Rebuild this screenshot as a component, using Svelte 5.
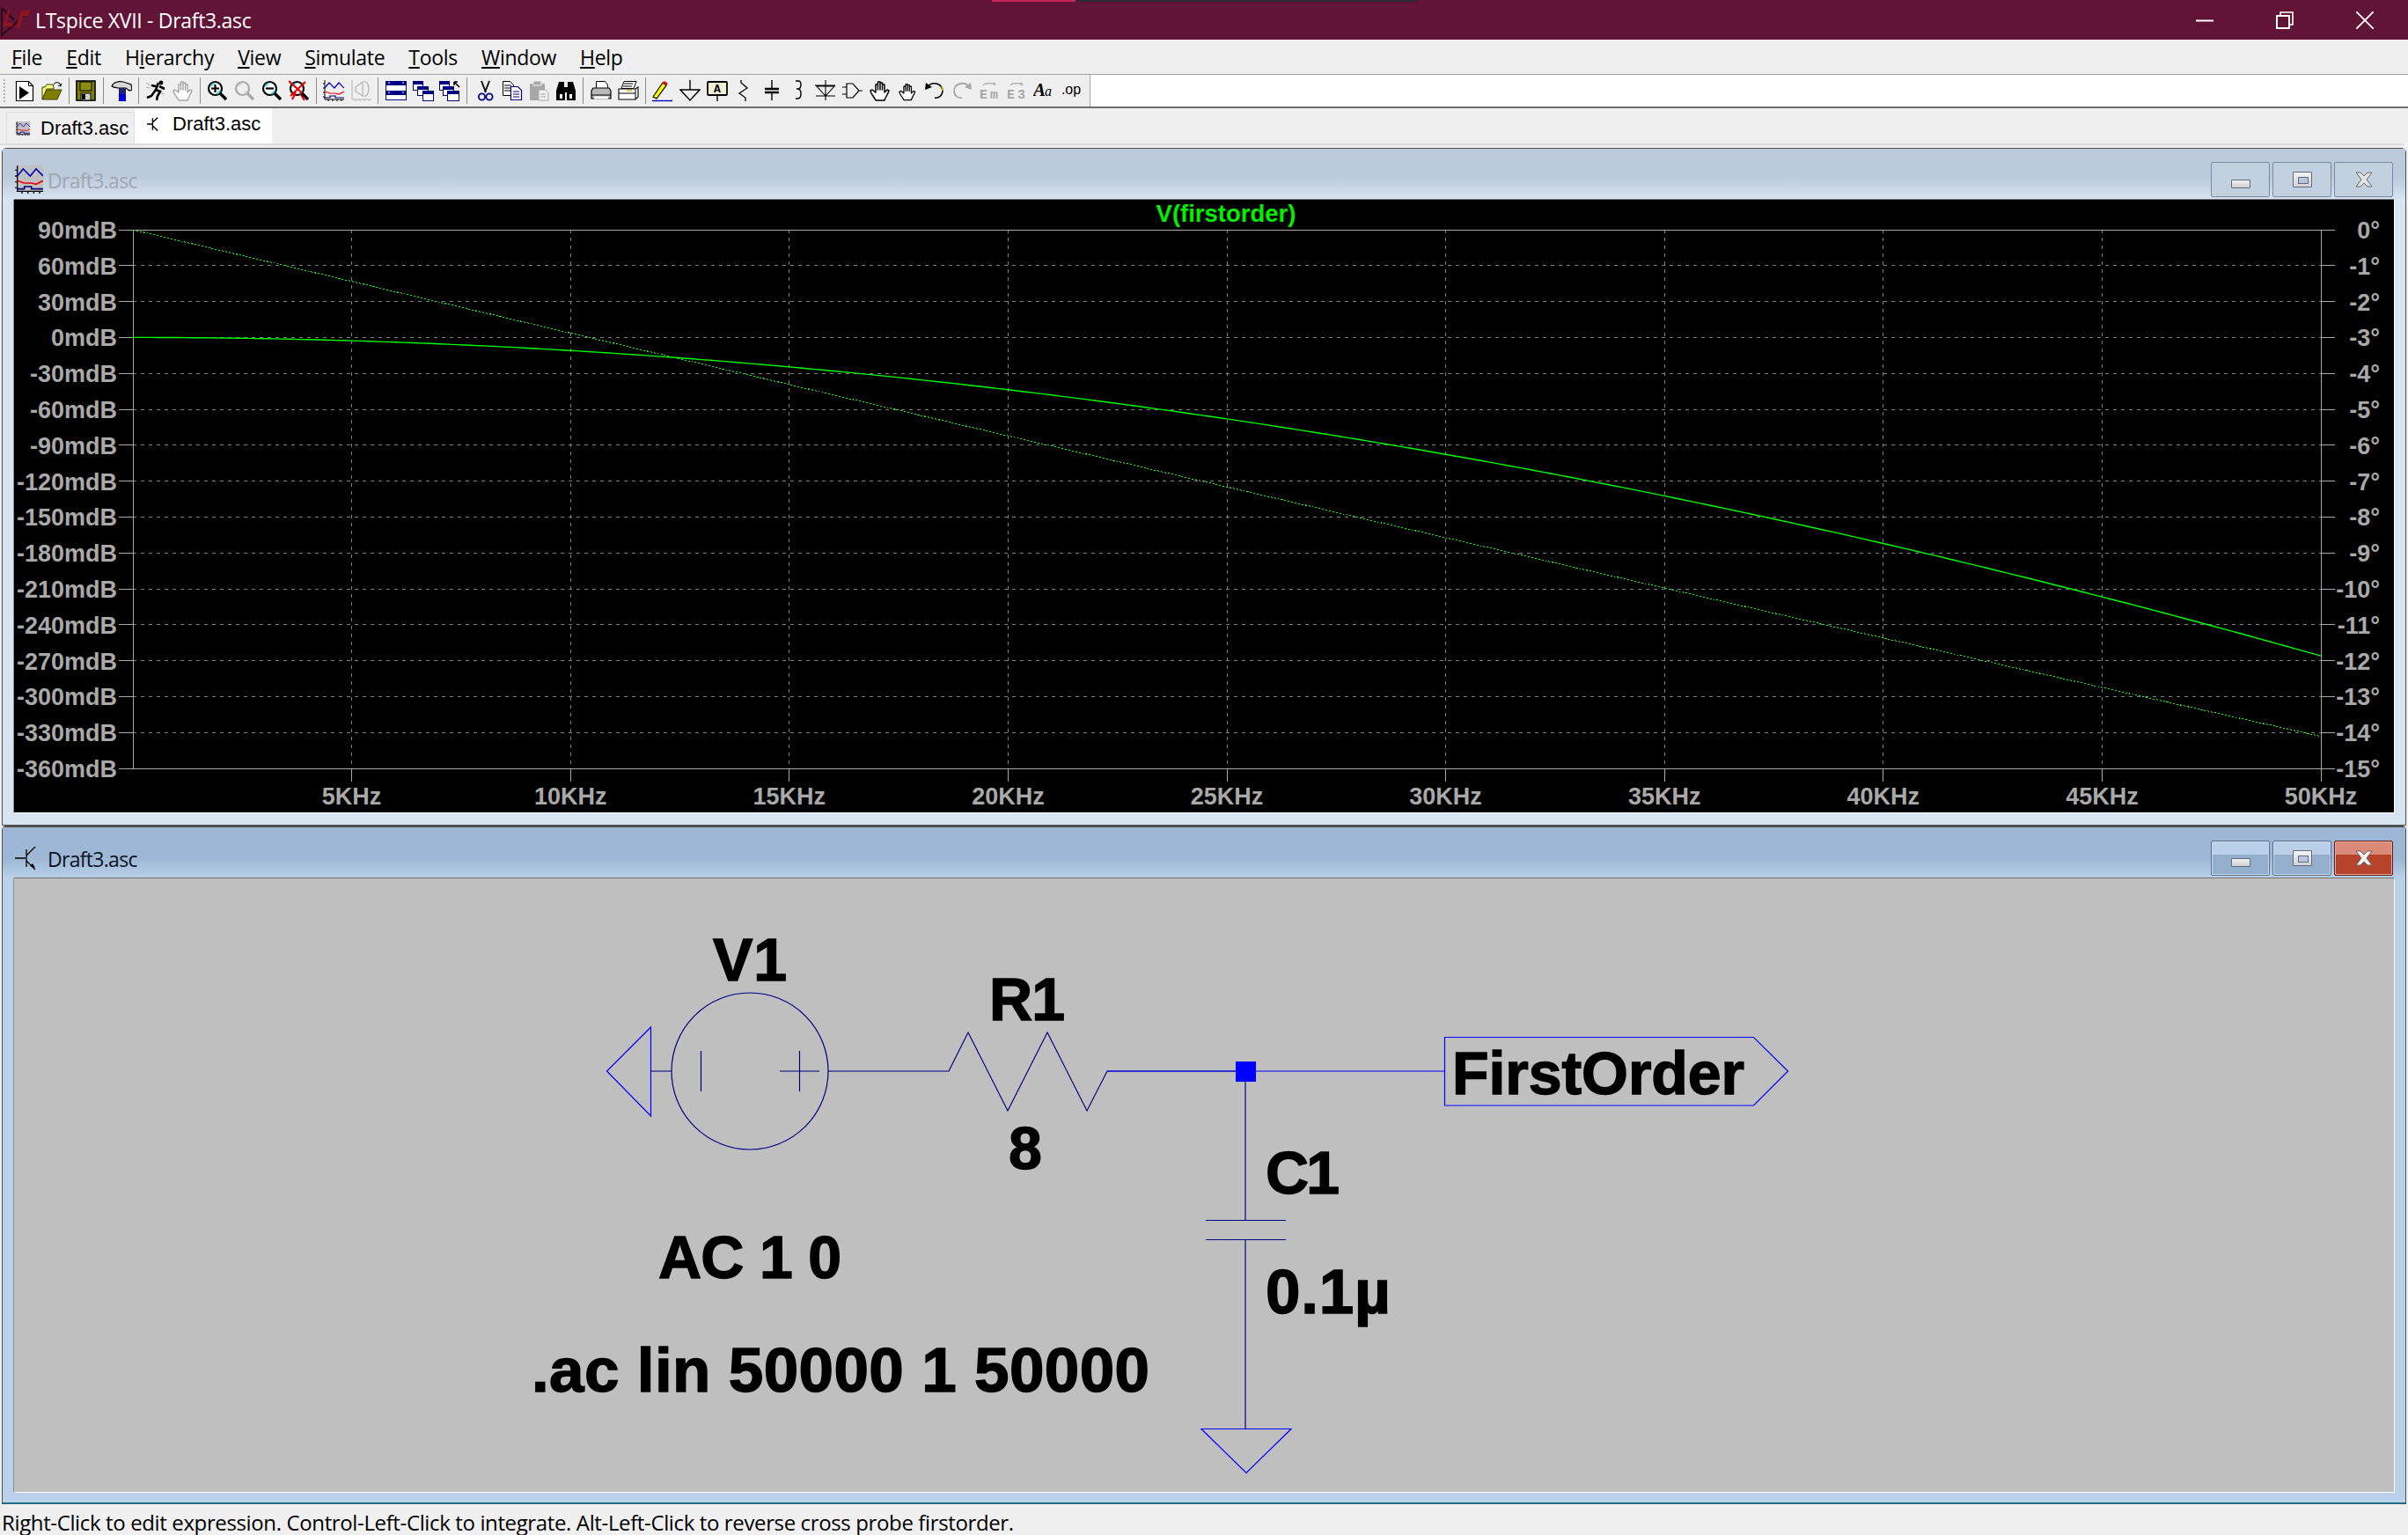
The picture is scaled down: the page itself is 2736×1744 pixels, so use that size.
<script>
  const menus = [
    { pre: '', ul: 'F', post: 'ile' },
    { pre: '', ul: 'E', post: 'dit' },
    { pre: 'H', ul: 'i', post: 'erarchy' },
    { pre: '', ul: 'V', post: 'iew' },
    { pre: '', ul: 'S', post: 'imulate' },
    { pre: '', ul: 'T', post: 'ools' },
    { pre: '', ul: 'W', post: 'indow' },
    { pre: '', ul: 'H', post: 'elp' }
  ];

  // toolbar glyphs, 24x24 boxes
  const mag = (inner, col = '#000', glass = '#fff') =>
    `<circle cx="9.5" cy="9.5" r="7.5" fill="${glass}" stroke="${col}" stroke-width="2.2"/>
     <path d="M4.5 7a6 6 0 0 1 4-3.4M15 12a6 6 0 0 1-3.5 3.5" fill="none" stroke="${col === '#000' ? '#22d8e8' : '#ccc'}" stroke-width="2"/>
     ${inner}
     <path d="M15 15l7 7" stroke="${col}" stroke-width="3.4"/>`;
  const plot = (a = '#0000c0', b = '#f00000', c = '#000080', k = '#000') =>
    `<path d="M2 0v22h22M0 4h2M0 9h2M0 14h2M0 19h2M6 22v2M11 22v2M16 22v2M21 22v2" fill="none" stroke="${k}" stroke-width="1"/>
     <path d="M2 9l5-6 6 6 5-6 6 6" fill="none" stroke="${a}" stroke-width="1.2"/>
     <path d="M2 13l6 2h6l4 1 6-3" fill="none" stroke="${b}" stroke-width="1.2"/>
     <path d="M2 20h6v-2h6v2h10" fill="none" stroke="${c}" stroke-width="1.2"/>`;
  const win = (x, y, w, h) =>
    `<rect x="${x + .5}" y="${y + .5}" width="${w}" height="${h}" fill="#fff" stroke="#000080"/>
     <rect x="${x}" y="${y}" width="${w + 1}" height="4" fill="#000080"/>`;
  const hand = (s = '#000') =>
    `<path d="M7 23C5 19 1 15 1 12l2-1 4 3V5h2.5v6V2H12v9V3h2.5v8V5H17v9l3-3 2 1c-1 4-4 7-5 11z" fill="#fff" stroke="${s}" stroke-width="1.5" stroke-linejoin="round"/>`;
  const gem = (a, b) =>
    `<path d="M5 6C7 3 15 3 19 5M19 5l-2-2M19 5l-2 1" fill="none" stroke="#a8a8a8" stroke-width="1.2"/>
     <text x="1" y="21" font-family="Liberation Mono" font-weight="700" font-size="15" fill="#a8a8a8">${a}</text>
     <text x="13" y="21" font-family="Liberation Mono" font-weight="700" font-size="15" fill="#a8a8a8">${b}</text>`;

  const icons = {
    new: `<path d="M2.5 1.5h14l5 5v17h-19z" fill="#fff" stroke="#000" stroke-width="1.2"/><path d="M16.5 1.5v5h5" fill="none" stroke="#000"/><path d="M6 7l11 7.5L6 22z" fill="#000"/>`,
    open: `<path d="M1 22V8h3l2-3h7l1 3v2H6z" fill="#ffff80" stroke="#404000"/><path d="M1 22l5-11h17l-5 11z" fill="#808000" stroke="#404000"/><path d="M14 5c2-3 5-3 7-1l1 3M22 7l-3-1M22 7l1-3" fill="none" stroke="#333" stroke-width="1.2"/>`,
    save: `<rect x="1" y="1" width="21" height="22" fill="#808000" stroke="#000" stroke-width="1.6"/><rect x="5" y="2" width="13" height="10" fill="#8c8c10" stroke="#000"/><rect x="6" y="15" width="11" height="8" fill="#d0d0d0" stroke="#000"/><rect x="7" y="16" width="4" height="6" fill="#000"/>`,
    hammer: `<path d="M1 7C3 2 9 1 14 2l9 3 1 6-3 1-4-3H8C5 8 3 9 1 7z" fill="#d8d8d8" stroke="#000" stroke-width="1.2"/><rect x="9" y="9" width="8" height="9" fill="#202070"/><rect x="9" y="16" width="8" height="8" fill="#0000e0"/>`,
    run: `<path d="M15 3l-3 8 5 2-3 5-1 5M12 11l-5 7-5 2M12 7l-5-1M16 7l6 3" fill="none" stroke="#000" stroke-width="2.6"/><circle cx="18" cy="3" r="2.4" fill="#000"/><path d="M1 3l5 3M1 8l4 1M18 15l4 1" fill="none" stroke="#aaa"/>`,
    handg: hand('#a8a8a8'),
    zin: mag(`<path d="M5 9.5h9M9.5 5v9" stroke="#000" stroke-width="2.2"/>`),
    zfit: mag('', '#a8a8a8', '#efefef'),
    zout: mag(`<path d="M5 9.5h9" stroke="#000" stroke-width="2.2"/>`),
    zx: mag(`<path d="M0 1l19 17M19 2L2 18M8 14l-4 8M13 15l5 8" stroke="#f00000" stroke-width="2.2"/>`),
    plot: plot(),
    fft: `<path d="M2 0v22h22M6 22v2M11 22v2M16 22v2M21 22v2" fill="none" stroke="#b4b4b4"/><path d="M6 8l8-6h4c4 4 4 12 0 16h-4L6 13z M14 2v16" fill="none" stroke="#b4b4b4" stroke-width="1.2"/>`,
    tile: `<rect x=".5" y="1.5" width="23" height="21" fill="#fff" stroke="#000080"/><rect y="1" width="24" height="5" fill="#000080"/><rect y="12" width="24" height="5" fill="#000080"/><path d="M3 3h2M19 3h2M3 14h2M19 14h2" stroke="#fff"/>`,
    casc: win(0, 1, 11, 10) + win(5, 7, 12, 10) + win(11, 12, 12, 11),
    casc2: win(0, 1, 11, 10) + win(4, 7, 12, 10) + win(9, 12, 13, 11) + `<path d="M23 8L17 2M17 2v4M17 2h4" fill="none" stroke="#000" stroke-width="1.6"/>`,
    cut: `<path d="M8 1l5 13M17 1l-5 13" stroke="#000" stroke-width="1.8"/><circle cx="8.5" cy="19" r="3.6" fill="none" stroke="#000080" stroke-width="1.8"/><circle cx="17" cy="19" r="3.6" fill="none" stroke="#000080" stroke-width="1.8"/>`,
    copy: `<path d="M1.5 1.5h8l4 4v12h-12z" fill="#fff" stroke="#000"/><path d="M3 6h8M3 9h8M3 12h8" stroke="#000"/><path d="M10.5 7.5h8l4 4v11h-12z" fill="#fff" stroke="#000080" stroke-width="1.2"/><path d="M13 13h7M13 16h7M13 19h7" stroke="#000080"/>`,
    paste: `<rect x="1" y="4" width="17" height="19" rx="1" fill="#a8a8a8"/><rect x="5" y="1" width="9" height="5" fill="#a8a8a8" stroke="#efefef"/><path d="M11 11h8l3 3v9H11z" fill="#efefef" stroke="#a8a8a8"/><path d="M13 16h6M13 19h6" stroke="#a8a8a8"/>`,
    bino: `<path d="M4 2h6v8l1 3v10H1V12zM14 2h6l3 10v11H13V13l1-3zM10 8h4v6h-4z" fill="#000"/><path d="M5 16h3v5H5zM16 16h3v5h-3z" fill="#fff"/>`,
    prev: `<path d="M6.5 1.5h10l3 4v7h-13z" fill="#fff" stroke="#000"/><path d="M3 9h18l2 3v9H1v-9z" fill="#b8b8b8" stroke="#000" stroke-width="1.2"/><path d="M1 17h22" stroke="#000"/><path d="M4 18.5h16v3H4z" fill="#fff"/>`,
    print: `<path d="M7 1.5h14l-3 8H4z" fill="#fff" stroke="#000"/><path d="M7 4h10M6 7h10" stroke="#000"/><path d="M1 10h19l3-2v11l-3 3H1z" fill="#fff" stroke="#000" stroke-width="1.1"/><path d="M1 15h19M20 10v12" stroke="#000"/><path d="M10 12h6" stroke="#e0d040" stroke-width="2"/>`,
    pencil: `<path d="M1 19l11-16 4 3L5 21z" fill="#ffff00" stroke="#000" stroke-width="1.2"/><path d="M12 3l2-2 4 3-2 2z" fill="#f00000"/><path d="M0 23.5h23" stroke="#0000c0" stroke-width="1.4"/>`,
    gnd: `<path d="M12 0v11M1 11h22L12 23z" fill="none" stroke="#000" stroke-width="1.4"/>`,
    label: `<rect x="1" y="2" width="22" height="15" rx="1" fill="#f0f0d8" stroke="#000" stroke-width="1.8"/><path d="M12 17v7" stroke="#000" stroke-width="1.4"/><text x="12" y="14" text-anchor="middle" font-family="Liberation Mono" font-weight="700" font-size="13" fill="#000">A</text>`,
    res: `<path d="M8 0v3l7 6-9 6 7 5v4" fill="none" stroke="#000" stroke-width="1.3"/>`,
    cap: `<path d="M12 0v10M12 14v9" stroke="#000" stroke-width="1.4"/><path d="M4 10h16M4 14h16" stroke="#000" stroke-width="2.4"/>`,
    ind: `<path d="M8 1h3c4 0 4 8 0 9h-2 2c4 1 4 10 0 11H8" fill="none" stroke="#000" stroke-width="1.4"/>`,
    diode: `<path d="M12 0v23M0 6h23M1 18h22M2 7h20L12 18z" fill="none" stroke="#000" stroke-width="1.1"/>`,
    and: `<path d="M0 8h5M0 16h5M23 12h-4M5 4h7l7 8-7 8H5z" fill="none" stroke="#000" stroke-width="1.2"/>`,
    handb: hand(),
    hands: `<g transform="translate(2 3) scale(.85)">${hand()}</g>`,
    undo: `<path d="M3 8C9 1 20 3 21 12c0 6-5 9-9 8" fill="none" stroke="#000" stroke-width="1.5"/><path d="M20 7c1 2 1 4 1 5" stroke="#d0b000" stroke-width="1.6" fill="none"/><path d="M1 11l1-8 7 5z" fill="#000"/>`,
    redo: `<path d="M21 8C15 1 4 3 3 12c0 6 5 9 9 8" fill="none" stroke="#a8a8a8" stroke-width="1.8"/><path d="M23 11l-1-8-7 5z" fill="#a8a8a8"/>`,
    em: gem('E', 'm'),
    e3: gem('E', '3'),
    aa: `<text x="0" y="18" font-family="Liberation Serif" font-weight="700" font-style="italic" font-size="21" fill="#000">A</text><text x="13" y="18" font-family="Liberation Serif" font-style="italic" font-size="16" fill="#000">a</text>`,
    op: `<text x="12" y="16" text-anchor="middle" font-family="Liberation Sans" font-size="16" fill="#000">.op</text>`
  };

  // null is a group separator
  const toolbar = ['new', 'open', null, 'save', null, 'hammer', null, 'run', 'handg', null, 'zin', 'zfit', 'zout', 'zx', null, 'plot', 'fft', null,
    'tile', 'casc', 'casc2', null, 'cut', 'copy', 'paste', 'bino', null, 'prev', 'print', null,
    'pencil', 'gnd', 'label', 'res', 'cap', 'ind', 'diode', 'and', 'handb', 'hands', 'undo', 'redo', 'em', 'e3', 'aa', 'op'];

  // plot geometry, in px inside the black pane
  const X0 = 135, X1 = 2621, Y0 = 34, Y1 = 646;
  const dy = (Y1 - Y0) / 15;
  const xAt = (khz) => X0 + ((X1 - X0) * khz) / 50;
  const rows = Array.from({ length: 16 }, (_, i) => ({
    y: Y0 + i * dy,
    left: `${90 - i * 30}mdB`,
    right: `${-i}°`.replace('-0', '0')
  }));
  const cols = Array.from({ length: 10 }, (_, i) => ({ x: xAt((i + 1) * 5), label: `${(i + 1) * 5}KHz` }));

  // first order RC low-pass, R=8 C=0.1u
  const fc = 1 / (2 * Math.PI * 8 * 1e-7) / 1000;
  const freqs = Array.from({ length: 251 }, (_, i) => (i * 50) / 250);
  const magPath = freqs.map((f) => {
    const mdb = -10000 * Math.log10(1 + (f / fc) ** 2);
    return `${xAt(f).toFixed(1)},${(Y0 + ((90 - mdb) * dy) / 30).toFixed(1)}`;
  }).join(' ');
  const phasePath = freqs.map((f) => {
    const deg = (Math.atan(f / fc) * 180) / Math.PI;
    return `${xAt(f).toFixed(1)},${(Y0 + deg * dy).toFixed(1)}`;
  }).join(' ');

  const labels = [
    { t: 'V1', x: 810, y: 1114, w: 84, size: 68 },
    { t: 'R1', x: 1124, y: 1159, w: 86, size: 68 },
    { t: '8', x: 1146, y: 1328, w: 40, size: 68 },
    { t: 'C1', x: 1438, y: 1356, w: 84, size: 68 },
    { t: '0.1µ', x: 1438, y: 1492, w: 142, size: 71 },
    { t: 'FirstOrder', x: 1650, y: 1243, w: 332, size: 68 },
    { t: 'AC 1 0', x: 748, y: 1452, w: 208, size: 68 },
    { t: '.ac lin 50000 1 50000', x: 604, y: 1581, w: 702, size: 71 }
  ];

  // textLength is read-only as a DOM property, so set it as an attribute
  function fit(node, w) {
    node.setAttribute('textLength', w);
    node.setAttribute('lengthAdjust', 'spacing');
  }
</script>

<div class="app">
  <div class="accent"><i class="pink"></i><i class="dark"></i></div>

  <header class="titlebar">
    <svg class="logo" width="34" height="38" viewBox="0 0 34 38">
      <path d="M2 5v31L32 10" fill="none" stroke="#2c0a16" stroke-width="2" />
      <path d="M2 5l14 14" stroke="#2c0a16" stroke-width="2" />
      <path d="M12 8h22l-2 6h-5l-5 14h-4l6-20h-7z M12 8l-5 14h8l-1 4H3l6-18z" fill="#8e1420" />
    </svg>
    <span class="app-title">LTspice XVII - Draft3.asc</span>
    <div class="caption">
      <svg width="20" height="20" viewBox="0 0 20 20"><path d="M0 10.5h20" stroke="#fff" stroke-width="2" /></svg>
      <svg width="20" height="20" viewBox="0 0 20 20"><rect x="1" y="5" width="14" height="14" fill="none" stroke="#fff" stroke-width="2" /><path d="M5 4V1h14v14h-3" fill="none" stroke="#fff" stroke-width="1.6" /></svg>
      <svg width="20" height="20" viewBox="0 0 20 20"><path d="M0 0l20 20M20 0L0 20" stroke="#fff" stroke-width="1.8" /></svg>
    </div>
  </header>

  <nav class="menubar">
    {#each menus as m}
      <span>{m.pre}<u>{m.ul}</u>{m.post}</span>
    {/each}
  </nav>

  <div class="toolrow">
    <div class="toolbar">
      <span class="grip"></span>
      {#each toolbar as name}
        {#if name}
          <span class="tool"><svg width="24" height="30" viewBox="0 -3 24 30">{@html icons[name]}</svg></span>
        {:else}
          <span class="sep"></span>
        {/if}
      {/each}
    </div>
  </div>

  <div class="tabs">
    <div class="tab">
      <svg width="16" height="16" viewBox="0 0 24 24" preserveAspectRatio="none"><rect width="24" height="24" fill="#c0c0c0" />{@html plot()}</svg>
      <span>Draft3.asc</span>
    </div>
    <div class="tab on">
      <svg width="14" height="16" viewBox="0 0 24 24" preserveAspectRatio="none"><path d="M0 12h11M11 2v20M11 9l10-8M11 15l10 8" fill="none" stroke="#000" stroke-width="2.4" /></svg>
      <span>Draft3.asc</span>
    </div>
  </div>

  <main class="mdi">
    <section class="win idle">
      <div class="win-head">
        <svg class="win-icon" width="32" height="32" viewBox="0 0 24 24"><rect x="2" width="22" height="22" fill="#c0c0c0" />{@html plot()}</svg>
        <span class="win-title">Draft3.asc</span>
        <div class="win-btns">
          <span class="wb"><i class="g-min"></i></span>
          <span class="wb"><i class="g-max"></i></span>
          <span class="wb"><svg class="g-x" width="24" height="20" viewBox="0 0 24 20"><path d="M3 2h5l4 4 4-4h5l-6 8 6 8h-5l-4-4-4 4H3l6-8z" fill="#e4e4e4" stroke="#666" /></svg></span>
        </div>
      </div>
      <div class="pane">
        <svg class="plot" width="2704" height="696" viewBox="0 0 2704 696">
          <g class="grid" shape-rendering="crispEdges">
            {#each rows.slice(1, -1) as r}
              <line x1={X0} x2={X1} y1={r.y} y2={r.y} />
            {/each}
            {#each cols.slice(0, -1) as c}
              <line x1={c.x} x2={c.x} y1={Y0} y2={Y1} />
            {/each}
          </g>
          <g class="axes" shape-rendering="crispEdges">
            <path d="M{X0} {Y0}V{Y1}M{X1} {Y0}V{Y1}M{X0 - 16} {Y0}H{X1 + 16}M{X0 - 16} {Y1}H{X1 + 16}" />
            {#each rows as r}
              <path d="M{X0 - 16} {r.y}H{X0}M{X1} {r.y}H{X1 + 16}" />
            {/each}
            {#each cols as c}
              <path d="M{c.x} {Y1}V{Y1 + 15}" />
            {/each}
          </g>
          <polyline class="trace" points={magPath} />
          <polyline class="trace dotted" points={phasePath} shape-rendering="crispEdges" />
          <g class="ticks">
            {#each rows as r}
              <text x="117" y={r.y + 10} text-anchor="end">{r.left}</text>
              <text x="2688" y={r.y + 10} text-anchor="end">{r.right}</text>
            {/each}
            {#each cols as c}
              <text x={c.x} y="687" text-anchor="middle">{c.label}</text>
            {/each}
          </g>
          <text class="expr" x="1377" y="25" text-anchor="middle">V(firstorder)</text>
        </svg>
      </div>
    </section>

    <section class="win active">
      <div class="win-head">
        <svg class="win-icon" width="24" height="32" viewBox="0 0 24 32"><path d="M0 16h12M13 6v20M13 13L23 3M13 19l10 10" fill="none" stroke="#000" stroke-width="1.3" /><path d="M23 27l-6-2 3-3z" fill="#000" /></svg>
        <span class="win-title">Draft3.asc</span>
        <div class="win-btns">
          <span class="wb"><i class="g-min"></i></span>
          <span class="wb"><i class="g-max"></i></span>
          <span class="wb close"><svg class="g-x" width="24" height="20" viewBox="0 0 24 20"><path d="M3 2h5l4 4 4-4h5l-6 8 6 8h-5l-4-4-4 4H3l6-8z" fill="#f2f2f2" stroke="#666" /></svg></span>
        </div>
      </div>
      <div class="pane sheet">
        <svg width="2704" height="697" viewBox="0 0 2704 697">
          <g transform="translate(-16 -998)">
            <g class="sym">
              <circle cx="852" cy="1217" r="89" />
              <path d="M739.5 1217H763M796.5 1194v46M908.5 1194v46M886 1217h45M941 1217h137l22-44 45 89 45-89 45 89 23-45h157" />
              <path d="M1415 1217v169M1370 1386.5h91M1370 1408.5h91M1415 1408v215" />
            </g>
            <g class="wire">
              <path d="M1258 1217h157M1415 1217h226" />
              <path d="M739.5 1167v101l-50-51z" />
              <path d="M1365 1623.5h102l-51 50z" />
              <path d="M1641.5 1178.5h351l39 38.5-39 39h-351z" />
            </g>
            <rect x="1404" y="1206" width="23" height="23" fill="#0000ff" />
            {#each labels as l}
              <text class="big" x={l.x} y={l.y} style:font-size="{l.size}px" use:fit={l.w}>{l.t}</text>
            {/each}
          </g>
        </svg>
      </div>
    </section>
  </main>

  <footer class="status">Right-Click to edit expression. Control-Left-Click to integrate. Alt-Left-Click to reverse cross probe firstorder.</footer>
</div>

<style>
  :global(body) {
    margin: 0;
  }

  .app {
    position: relative;
    width: 2736px;
    height: 1744px;
    display: flex;
    flex-direction: column;
    overflow: hidden;
    background: #f0f0f0;
    font-family: "Open Sans", sans-serif;
    color: #000;
  }

  .accent {
    position: absolute;
    top: 0;
    left: 1127px;
    display: flex;
    height: 2px;
  }
  .pink { width: 95px; background: #c8245c; }
  .dark { width: 388px; background: #2a2a30; }

  .titlebar {
    flex: 0 0 45px;
    display: flex;
    align-items: center;
    background: #611435;
    color: #fff;
  }
  .logo { margin-left: 0; }
  .app-title {
    margin-left: 6px;
    font-size: 23px;
    letter-spacing: -0.32px;
  }
  .caption {
    margin-left: auto;
    margin-right: 39px;
    display: flex;
    gap: 71px;
  }

  .menubar {
    flex: 0 0 40px;
    display: flex;
    align-items: center;
    gap: 27px;
    padding-left: 13px;
    box-sizing: border-box;
    border-bottom: 1px solid #a0a0a0;
    background: #efefef;
    font-size: 23px;
    letter-spacing: -0.3px;
  }

  .toolrow {
    flex: 0 0 38px;
    box-sizing: border-box;
    background: #fff;
    border-bottom: 2px solid #6e6e6e;
  }
  .toolbar {
    width: 1239px;
    height: 36px;
    box-sizing: border-box;
    display: flex;
    align-items: center;
    border-right: 1px solid #a8a8a8;
    background: #efefef;
  }
  .grip {
    width: 12.5px;
    height: 28px;
    background: radial-gradient(circle, #b0b0b0 1px, transparent 1.4px) 3px 0 / 4px 4px repeat-y;
  }
  .tool {
    flex: 0 0 30.9px;
    display: flex;
    justify-content: center;
  }
  .sep {
    flex: 0 0 1px;
    height: 30px;
    margin: 0 4px 0 3.5px;
    background: #8c8c8c;
  }

  .tabs {
    flex: 0 0 42px;
    display: flex;
    align-items: flex-end;
    box-sizing: border-box;
    padding-left: 7px;
    margin-right: 4px;
    border-bottom: 2px solid #dcdcdc;
    background: #efefef;
    font-family: "Liberation Sans", sans-serif;
    font-size: 22px;
    white-space: nowrap;
  }
  .tab {
    display: flex;
    align-items: center;
    box-sizing: border-box;
    width: 146px;
    height: 36px;
    gap: 12px;
    padding-left: 10px;
    border: 1px solid #dcdcdc;
    border-bottom: 0;
  }
  .tab svg { flex: none; }
  .tab.on {
    width: 156px;
    height: 40px;
    gap: 15px;
    padding: 0 0 4px 14px;
    background: #fff;
    border: 0;
  }

  .mdi {
    flex: 1;
    display: flex;
    flex-direction: column;
    box-sizing: border-box;
    padding: 3px 2px 0;
    min-height: 0;
  }

  .win {
    display: flex;
    flex-direction: column;
    box-sizing: border-box;
    padding: 0 14px 0 13px;
    border: 1px solid #505050;
    border-radius: 5px 5px 0 0;
  }
  .win.idle {
    height: 770px;
    background: #d7e4f1;
  }
  .win.active {
    height: 771px;
    background: #b9d1ea;
    border-top-width: 2px;
    border-bottom: 2px solid #1f6f80;
  }

  .win-head {
    flex: 0 0 58px;
    display: flex;
    align-items: center;
    margin: 0 -14px 0 -13px;
    padding: 11px 0 0 14px;
    box-sizing: border-box;
  }
  .idle .win-head { background: linear-gradient(#bbcbdb 0 55%, #d7e4f1); }
  .active .win-head { background: linear-gradient(#9db7d4 0 60%, #b9d1ea); }
  .win-icon { flex: none; }
  .win-title {
    margin-left: 5px;
    padding-top: 2px;
    font-size: 23px;
    letter-spacing: -0.7px;
    color: #000;
  }
  .active .win-title { margin-left: 13px; color: #0a1420; }
  .idle .win-title { color: #9ea8b2; }

  .win-btns {
    margin-left: auto;
    margin-right: 14px;
    display: flex;
    gap: 3px;
  }
  .wb {
    width: 67px;
    height: 40px;
    box-sizing: border-box;
    display: flex;
    align-items: center;
    justify-content: center;
    border: 1px solid #7a8aa4;
    border-radius: 2px;
    background: #c2d1e0;
  }
  .active .wb {
    border-color: #5d6f8e;
    background: linear-gradient(#b9d0e8 0 40%, #93afcc 40%);
    box-shadow: inset 0 0 0 1px #c6dbef;
  }
  .wb.close,
  .active .wb.close {
    border-color: #5c1e24;
    background: linear-gradient(#dc8a78 0 40%, #b7432b 40%);
    box-shadow: inset 0 0 0 1px #e8a89a;
  }
  .g-min {
    display: block;
    width: 22px;
    height: 10px;
    margin-top: 10px;
    box-sizing: border-box;
    border: 1px solid #5c6a82;
    border-radius: 1px;
    background: linear-gradient(#f2f2f2, #cfcfcf);
  }
  .g-max {
    display: block;
    width: 22px;
    height: 18px;
    box-sizing: border-box;
    border: 1px solid #5c6a82;
    border-radius: 1px;
    background: linear-gradient(#f2f2f2, #d4d4d4);
    position: relative;
  }
  .g-max::after {
    content: "";
    position: absolute;
    left: 5px;
    top: 5px;
    width: 10px;
    height: 6px;
    border: 1px solid #5c6a82;
    background: #b8c8dc;
  }
  .g-x { display: block; }

  .pane {
    width: 2704px;
    height: 696px;
    background: #000;
    box-shadow: 0 -1px 0 #707070, 1px 1px 0 #fff, -1px 0 0 #909090;
  }
  .pane svg { display: block; }
  .sheet {
    height: 697px;
    background: #bfbfbf;
  }

  .grid line {
    stroke: #808080;
    stroke-width: 1;
    stroke-dasharray: 4 5;
  }
  .axes path {
    fill: none;
    stroke: #a9a9a9;
    stroke-width: 1;
  }
  .trace {
    fill: none;
    stroke: #00ff00;
    stroke-width: 1.4;
  }
  .trace.dotted {
    stroke-width: 1;
    stroke-dasharray: 2 2;
  }
  .ticks text {
    font: 700 27px "Liberation Sans", sans-serif;
    fill: #a9a9a9;
  }
  .expr {
    font: 700 27.5px "Liberation Sans", sans-serif;
    fill: #00f000;
  }

  .sym circle,
  .sym path {
    fill: none;
    stroke: #000080;
    stroke-width: 1.2;
  }
  .wire path {
    fill: none;
    stroke: #0000ff;
    stroke-width: 1.2;
  }
  .big {
    font: 700 68px "Liberation Sans", sans-serif;
    fill: #000;
    stroke: #000;
    stroke-width: 1.4px;
  }

  .status {
    flex: 0 0 35px;
    box-sizing: border-box;
    padding-top: 9px;
    padding-left: 2px;
    line-height: 24px;
    font-size: 24px;
    letter-spacing: -0.37px;
    white-space: nowrap;
    background: #f0f0f0;
  }
</style>
